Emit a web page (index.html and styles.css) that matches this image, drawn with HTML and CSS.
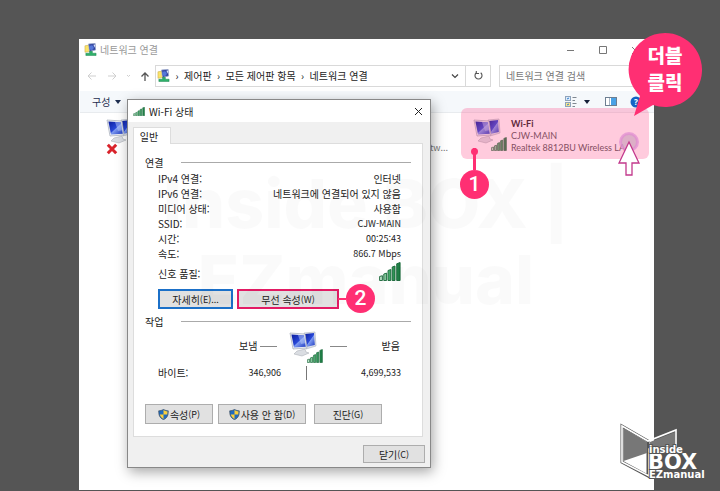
FILE: index.html
```html
<!DOCTYPE html>
<html lang="ko">
<head>
<meta charset="utf-8">
<title>네트워크 연결</title>
<link rel="stylesheet" href="styles.css">
</head>
<body>
<svg class="defs" aria-hidden="true">
  <defs>
    <linearGradient id="screen" x1="0" y1="0" x2="1" y2="1">
      <stop offset="0" stop-color="#0a1c9c"/><stop offset=".5" stop-color="#2948d8"/><stop offset=".55" stop-color="#7d9af0"/><stop offset="1" stop-color="#1c37c0"/>
    </linearGradient>
    <linearGradient id="bar" x1="0" y1="0" x2="1" y2="0">
      <stop offset="0" stop-color="#d5f0dc"/><stop offset=".5" stop-color="#3fa765"/><stop offset="1" stop-color="#1b7a42"/>
    </linearGradient>
    <symbol id="computers" viewBox="0 0 28 26">
      <path d="M15 2l11-1 1 14-10 3z" fill="#dfe3ea" stroke="#a9b0bd" stroke-width=".6"/>
      <path d="M16 3l9-1 .8 12-8.800 2z" fill="url(#screen)"/>
      <path d="M8 20l8-2 1 3 3 1-7 3-8-2z" fill="#dadde2" stroke="#a2a7ae" stroke-width=".5"/>
      <path d="M1 2l15 1 2 14-14 1z" fill="#eef0f4" stroke="#a3aab8" stroke-width=".7"/>
      <path d="M2.400 3.400l12.600.8 1.800 11.600-11.800.8z" fill="url(#screen)"/>
      <path d="M9 3.900l6 .4 1.300 8-4.300.7z" fill="#bccdf9" opacity=".5"/>
    </symbol>
    <symbol id="signal" viewBox="0 0 22 19">
      <g fill="url(#bar)" stroke="#166638" stroke-width=".9">
        <path d="M.6 14.500l2.800-.8v4.800h-2.800zM4.800 12l2.800-.9v7.400h-2.800zM9 8.500l2.800-1v11h-2.800zM13.200 5l2.800-1v14.500h-2.800zM17.700 1.800l3.400-1.300v18h-3.400z"/>
      </g>
    </symbol>
    <symbol id="shield" viewBox="0 0 12 12">
      <path d="M6 .3C4.500 1.500 2.500 2 .8 2c0 4.500.7 7.500 5.200 9.700C10.500 9.500 11.200 6.500 11.200 2 9.500 2 7.500 1.500 6 .3z" fill="#1f6bc0" stroke="#3d4b5c" stroke-width=".8"/>
      <path d="M6 1.200c1.300 1 2.700 1.400 4.400 1.500 0 1.200-.1 2.300-.4 3.300H6zM6 6v4.800C3.600 9.500 2.500 8.200 2 6z" fill="#fbcf3a"/>
    </symbol>
    <symbol id="network" viewBox="0 0 14 14">
      <path d="M1 3l6-1v7l-6 1z" fill="#fbe36a" stroke="#bda33e" stroke-width=".5"/>
      <path d="M5 1l7-.5.5 7L6 9z" fill="#2d3f9c" stroke="#93a0c6" stroke-width=".8"/>
      <circle cx="8" cy="5" r="2.600" fill="#5577d8"/><path d="M10 2l2-.5v4z" fill="#d7e2fa"/>
      <path d="M6 9h3v2h4v2.500H2V11h4z" fill="#2fb06a" stroke="#13804a" stroke-width=".5"/>
    </symbol>
  </defs>
</svg>

<main class="window">
  <header class="titlebar">
    <svg class="icon-net"><use href="#network"/></svg>
    <h1 class="title">네트워크 연결</h1>
    <svg class="caption-icons" viewBox="0 0 84 10"><path d="M2 5.500h7M34.500 1.500h7v7h-7zM67 2l7 7M74 2l-7 7" fill="none" stroke="#777"/></svg>
  </header>

  <nav class="address-row">
    <svg class="nav-icons" viewBox="0 0 70 14" fill="none">
      <path d="M4 7h8M7.500 3.500L4 7l3.500 3.500M24 7h8M28.500 3.500L32 7l-3.500 3.500M43 6l1.500 1.500L46 6" stroke="#cfcfcf"/>
      <path d="M61 12V4M57.500 7.500L61 4l3.500 3.500" stroke="#555" stroke-width="1.300"/>
    </svg>
    <div class="address">
      <svg class="icon-net"><use href="#network"/></svg>
      <span class="sep">›</span><a href="#">제어판</a><span class="sep">›</span><a href="#">모든 제어판 항목</a><span class="sep">›</span><a href="#">네트워크 연결</a>
      <svg class="chevron" viewBox="0 0 10 10"><path d="M2 3.500l3 3 3-3" fill="none" stroke="#444" stroke-width="1.200"/></svg>
    </div>
    <button class="refresh" aria-label="새로 고침"><svg viewBox="0 0 10 10"><path d="M3 2.500A3.200 3.200 0 1 0 7 2.500M3 .8V3.200H5.500" fill="none" stroke="#555"/></svg></button>
    <input class="search" type="search" placeholder="네트워크 연결 검색" aria-label="네트워크 연결 검색">
  </nav>

  <div class="toolbar">
    <button class="organize">구성 <svg viewBox="0 0 6 4"><path d="M0 0h6L3 4z" fill="#1e2e50"/></svg></button>
    <svg class="view-icons" viewBox="0 0 80 14">
      <rect x=".5" y="1.500" width="5" height="4" fill="#dceafa" stroke="#8fa3ba"/><rect x=".5" y="7.500" width="5" height="4" fill="#f7e48c" stroke="#8fa3ba"/>
      <path d="M2 4l2-1M2 10l2-1" stroke="#2b7dd0"/><path d="M7.500 2.500h4M7.500 5.500h2.500M7.500 8.500h4M7.500 11.500h2.500" stroke="#7f8790"/>
      <path d="M19 5h6l-3 4z" fill="#151f38"/>
      <rect x="40.500" y="2.500" width="11" height="8" fill="#fff" stroke="#6d7e91"/><path d="M46 3h5v7h-5z" fill="#4aa2e6"/><path d="M44.500 3v7" stroke="#a7b4c2"/>
      <circle cx="71" cy="7" r="5.500" fill="#1464c4"/><text x="69" y="10" class="help">?</text>
    </svg>
  </div>

  <section class="files">
    <div class="adapter first">
      <svg class="pc"><use href="#computers"/></svg>
      <svg class="cross" viewBox="0 0 10 10"><path d="M1.500 1.500l7 7M8.500 1.500l-7 7" stroke="#d9232b" stroke-width="2.500"/></svg>
    </div>
    <span class="clipped">etw...</span>
    <div class="adapter wifi">
      <div class="adapter-icon"><svg class="pc"><use href="#computers"/></svg><svg class="sig"><use href="#signal"/></svg></div>
      <div class="adapter-text"><b>Wi-Fi</b><span>CJW-MAIN</span><span>Realtek 8812BU Wireless LA...</span></div>
    </div>
  </section>
</main>

<div class="highlight"></div>

<section class="dialog" role="dialog" aria-labelledby="dialog-title">
  <header class="dialog-title">
    <svg class="title-signal" viewBox="0 0 22 19" preserveAspectRatio="none"><use href="#signal"/></svg>
    <h2 id="dialog-title">Wi-Fi 상태</h2>
    <button class="close" aria-label="닫기"><svg viewBox="0 0 9 9"><path d="M1 1l7 7M8 1L1 8" stroke="#222"/></svg></button>
  </header>
  <div class="dialog-body">
    <button class="tab">일반</button>
    <div class="panel">
      <h3 class="group">연결</h3>
      <dl class="facts">
        <div><dt>IPv4 연결:</dt><dd>인터넷</dd></div>
        <div><dt>IPv6 연결:</dt><dd>네트워크에 연결되어 있지 않음</dd></div>
        <div><dt>미디어 상태:</dt><dd>사용함</dd></div>
        <div><dt>SSID:</dt><dd class="latin">CJW-MAIN</dd></div>
        <div><dt>시간:</dt><dd class="latin">00:25:43</dd></div>
        <div><dt>속도:</dt><dd class="latin">866.7 Mbps</dd></div>
        <div class="quality"><dt>신호 품질:</dt><dd><svg><use href="#signal"/></svg></dd></div>
      </dl>
      <div class="buttons details">
        <button class="btn default">자세히<small>(E)...</small></button>
        <button class="btn marked">무선 속성<small>(W)</small></button>
      </div>
      <h3 class="group">작업</h3>
      <div class="activity">
        <span>보냄</span><i class="dash"></i>
        <div class="activity-icon"><svg class="pc"><use href="#computers"/></svg><svg class="sig"><use href="#signal"/></svg></div>
        <i class="dash"></i><span class="received">받음</span>
      </div>
      <div class="bytes"><span>바이트:</span><span class="latin num">346,906</span><i class="divider"></i><span class="latin num">4,699,533</span></div>
      <div class="buttons actions">
        <button class="btn"><svg><use href="#shield"/></svg>속성<small>(P)</small></button>
        <button class="btn wide"><svg><use href="#shield"/></svg>사용 안 함<small>(D)</small></button>
        <button class="btn last">진단<small>(G)</small></button>
      </div>
    </div>
    <footer class="dialog-footer"><button class="btn">닫기<small>(C)</small></button></footer>
  </div>
</section>

<div class="watermark">Inside BOX |<br>EZmanual</div>
<div class="pin pin-one"><i></i><b>1</b></div>
<div class="pin pin-two"><i></i><b>2</b></div>
<svg class="pointer" viewBox="0 0 28 50">
  <circle cx="13" cy="13" r="8.500" fill="#cfa3bd" fill-opacity=".7" stroke="#df8cd2" stroke-opacity=".7" stroke-width="3"/>
  <path d="M13 13L23 34H16V46H10V34H3z" fill="#fff" stroke="#c2388c" stroke-width="1.300"/>
</svg>
<div class="bubble">
  <svg viewBox="0 0 72 84"><path d="M36 0a37 37 0 1 1-12 72L5 83 11 63A36.500 36.500 0 0 1 36 0z" fill="#ff2f73"/></svg>
  <p>더블<br>클릭</p>
</div>
<svg class="logo" viewBox="0 0 88 56">
  <path d="M2 2L28 17V52L2 38z" fill="#fff" stroke="#555" stroke-width="3"/>
  <path d="M2 2L28 17 56 6V25H29V52L2 38z" fill="none" stroke="#fff" stroke-width="1.600"/>
  <path d="M3.500 4L27 18V29L3.500 37zM30 18L55 8V24H30z" fill="#777"/>
  <text x="28" y="45" class="logo-big">BOX</text>
  <text x="29" y="29" class="logo-small">inside</text>
  <text x="29" y="54" class="logo-small">EZmanual</text>
</svg>
</body>
</html>
```
FILE: styles.css
```css
* { box-sizing: border-box; }

body {
  margin: 0;
  min-height: 100vh;
  padding: 39px 66px 1px 79px;
  background: #555;
  color: #222;
  font: 10px/15px "Noto Sans CJK KR", sans-serif;
  position: relative;
  overflow: hidden;
}

h1, h2, h3, p, dl, dd { margin: 0; font: inherit; }
button, input { font: inherit; color: inherit; padding: 0; border: 0; background: none; }
a { color: inherit; text-decoration: none; }
svg { display: block; flex: none; }
.defs { position: absolute; width: 0; height: 0; }
small, .latin { font-size: 9px; }

.window { min-height: calc(100vh - 40px); background: #fff; }
.titlebar { display: flex; align-items: center; gap: 3px; height: 21px; padding: 0 5px; color: #999; }
.icon-net { width: 13px; height: 13px; }
.caption-icons { width: 84px; height: 10px; margin-left: auto; }

.address-row { display: flex; align-items: center; height: 31px; padding-right: 4px; }
.nav-icons { width: 70px; height: 14px; margin: 0 1px 0 5px; }
.address { display: flex; align-items: center; flex: 1; height: 22px; padding: 0 5px 0 1px; border: 1px solid #d9d9d9; }
.sep { width: 14px; text-align: center; }
.chevron { width: 10px; height: 10px; margin-left: auto; }
.refresh { display: grid; place-items: center; width: 25px; height: 22px; border: 1px solid #d9d9d9; border-left: 0; }
.refresh svg { width: 11px; height: 11px; }
.search { width: 151px; height: 22px; margin-left: 8px; padding: 0 6px; border: 1px solid #d9d9d9; }
.search::placeholder { color: #777; }

.toolbar { display: flex; align-items: center; justify-content: space-between; height: 22px; margin-left: 1px; padding: 0 9px 0 12px; background: #f5f8fb; border-bottom: 1px solid #e8ebee; color: #1e2e50; }
.organize { display: flex; align-items: center; gap: 5px; }
.organize svg { width: 6px; height: 4px; }
.view-icons { width: 80px; height: 14px; }
.help { font: bold 8px "Noto Sans", sans-serif; fill: #fff; }

.files { display: flex; padding: 5px; }
.pc { width: 28px; height: 26px; }
.first { width: 320px; padding-left: 22px; }
.cross { width: 12px; height: 12px; margin-top: -1px; }
.clipped { margin-top: 22px; width: 69px; padding-left: 21px; color: #777; font-size: 9px; }
.wifi { display: flex; }
.adapter-icon { width: 38px; }
.sig { width: 16px; height: 14px; margin: -7px 0 0 18px; }
.adapter-text { display: flex; flex-direction: column; font: 9px/12px Lato, sans-serif; color: #555; white-space: nowrap; }
.adapter-text b { font-weight: 700; color: #222; }

.dialog { position: absolute; left: 127px; top: 99px; width: 304px; border: 1px solid #888; background: #f0f0f0; box-shadow: 2px 4px 12px rgba(0, 0, 0, .35); }
.dialog-title { display: flex; align-items: center; gap: 4px; height: 22px; padding: 0 7px 0 5px; background: #fff; }
.title-signal { width: 12px; height: 9px; }
.close { margin-left: auto; }
.close svg { width: 9px; height: 9px; }
.dialog-body { padding: 5px 5px 4px; }
.tab { display: block; width: 38px; height: 17px; padding-right: 6px; margin-bottom: -1px; position: relative; background: #fff; border: 1px solid #ddd; border-bottom: 0; }
.panel { margin-right: 2px; padding: 11px; background: #fff; border: 1px solid #ddd; }
.group { display: flex; align-items: center; gap: 18px; }
.group::after { content: ""; flex: 1; height: 1px; background: #aaa; }
.facts { padding: 1px 10px 0 13px; }
.facts div { display: flex; align-items: center; justify-content: space-between; }
.facts .quality { height: 24px; }
.quality svg { width: 22px; height: 19px; margin-top: -4px; }
.buttons { display: flex; }
.btn { display: flex; align-items: center; justify-content: center; width: 68px; height: 20px; border: 1px solid #adadad; background: #e1e1e1; white-space: nowrap; }
.btn svg { width: 11px; height: 11px; margin-right: 1px; }
.details { gap: 4px; padding: 4px 0 5px 13px; }
.details .btn { width: 75px; border: 2px solid #1b70c8; }
.details .btn.marked { width: 102px; border-color: #e31b64; }
.activity { display: flex; align-items: flex-start; gap: 3px; padding: 2px 11px 2px 94px; line-height: 30px; }
.dash { width: 17px; height: 1px; margin-top: 15px; background: #888; }
.activity-icon { width: 43px; padding-left: 9px; }
.activity .sig { margin: -8px 0 0 18px; }
.activity .dash ~ .dash { margin-left: 4px; }
.activity .received { margin-left: auto; }
.bytes { display: grid; grid-template-columns: 60px 63px 26px 1fr; align-items: center; padding: 0 10px 0 13px; }
.num { text-align: right; }
.divider { justify-self: end; width: 1px; height: 14px; background: #777; }
.actions { gap: 5px; padding: 24px 0 1px; }
.actions .wide { width: 88px; }
.actions .last { margin-left: 3px; }
.dialog-footer { display: flex; justify-content: flex-end; padding-top: 8px; }
.dialog-footer .btn { width: 62px; height: 18px; }

.watermark { position: absolute; left: 151px; top: 165px; width: 430px; text-align: center; font: 800 68px/76px Inter, sans-serif; color: rgba(0, 0, 0, .02); white-space: nowrap; pointer-events: none; }
.highlight { position: absolute; left: 461px; top: 108px; width: 188px; height: 51px; border-radius: 6px; background: rgba(255, 64, 129, .27); }

.pin { position: absolute; display: flex; align-items: center; }
.pin b { width: 29px; height: 29px; border-radius: 50%; background: #ff2f73; color: #fff; font: 500 21px/29px Roboto, sans-serif; text-align: center; }
.pin i { background: #ff2f73; }
.pin-one { left: 460px; top: 148px; flex-direction: column; }
.pin-one i { width: 3px; height: 22px; position: relative; }
.pin-one i::before { content: ""; position: absolute; left: -2px; top: 0; width: 7px; height: 7px; border-radius: 50%; background: #ff2f73; }
.pin-two { left: 338px; top: 284px; }
.pin-two i { width: 8px; height: 2px; }

.pointer { position: absolute; left: 616px; top: 129px; width: 28px; height: 50px; }
.bubble { position: absolute; left: 629px; top: 33px; width: 72px; }
.bubble svg { width: 72px; height: 84px; overflow: visible; }
.bubble p { position: absolute; inset: 8px 0 auto; text-align: center; color: #fff; font-size: 19px; line-height: 27px; font-weight: 900; }
.logo { position: absolute; left: 620px; top: 424px; width: 88px; height: 56px; overflow: visible; }
.logo text { font-family: "DejaVu Sans", sans-serif; font-weight: 700; fill: #fff; stroke: #555; stroke-width: 2px; paint-order: stroke; }
.logo .logo-small { font-size: 10px; }
.logo .logo-big { font-size: 21px; }
```
